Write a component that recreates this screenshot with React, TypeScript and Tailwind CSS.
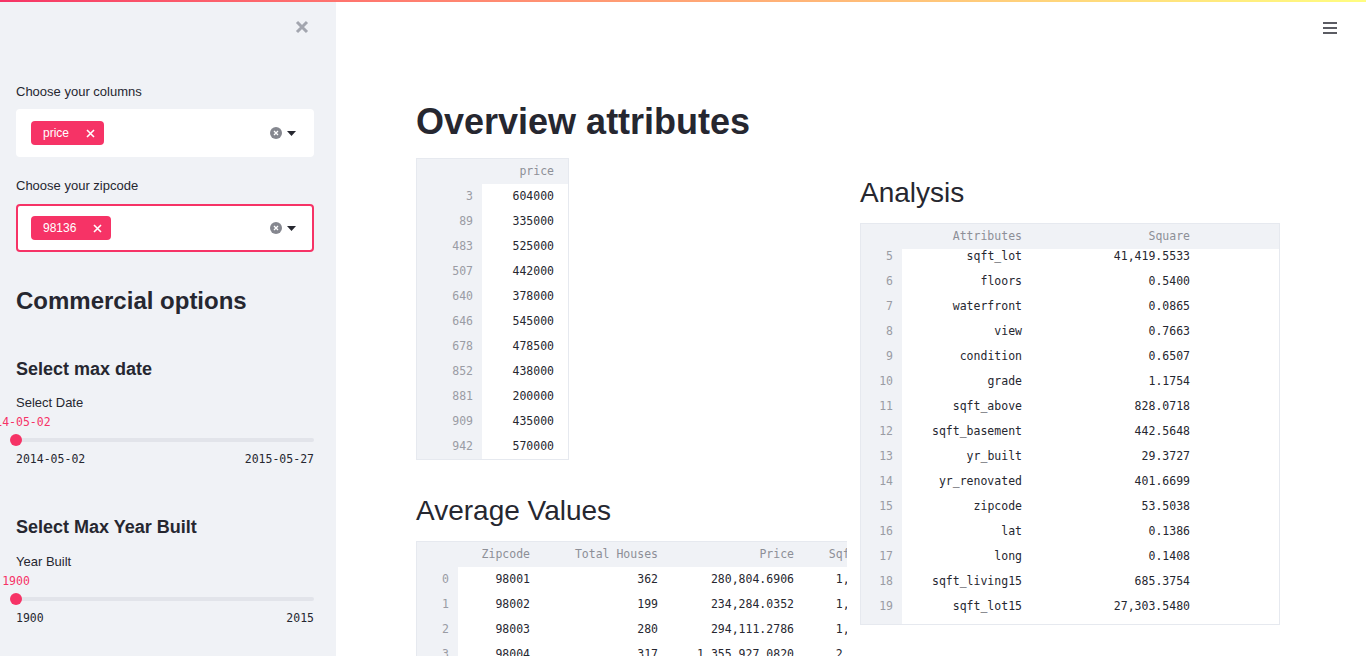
import React from "react";

const sans = "font-['Liberation_Sans',Arial,sans-serif]";
const mono = "font-['DejaVu_Sans_Mono',monospace]";

type Column = { name: string; w: string; cells: string[] };

function DataFrame({
  indexW,
  index,
  columns,
  bodyClass = "",
  shift = "",
  className = "",
}: {
  indexW: string;
  index: string[];
  columns: Column[];
  bodyClass?: string;
  shift?: string;
  className?: string;
}) {
  return (
    <div className={`overflow-hidden border-[#e6e9ef] bg-white text-[11.5px] ${mono} ${className}`}>
      <div className="flex h-[25px] whitespace-nowrap bg-[#f0f2f6] leading-[25px] text-[#8d8f97]">
        <div className={`${indexW} shrink-0`} />
        {columns.map((c) => (
          <div key={c.name} className={`${c.w} shrink-0 pr-[14px] text-right`}>
            {c.name}
          </div>
        ))}
      </div>
      <div className={`flex ${bodyClass}`}>
        <div className={`${indexW} shrink-0 bg-[#f0f2f6] text-[#9a9ca4]`}>
          <div className={shift}>
            {index.map((i) => (
              <div key={i} className="h-[25px] pr-[9px] text-right leading-[25px]">
                {i}
              </div>
            ))}
          </div>
        </div>
        {columns.map((c) => (
          <div key={c.name} className={`${c.w} shrink-0 text-[#262730]`}>
            <div className={shift}>
              {c.cells.map((v, k) => (
                <div key={k} className="h-[25px] whitespace-nowrap pr-[14px] text-right leading-[25px]">
                  {v}
                </div>
              ))}
            </div>
          </div>
        ))}
      </div>
    </div>
  );
}

function Multiselect({ value, focused }: { value: string; focused?: boolean }) {
  return (
    <div
      className={`flex h-12 items-center rounded-[4px] border-2 bg-white pl-[13px] pr-4 ${
        focused ? "border-[#f63366]" : "border-white"
      }`}
    >
      <span className="flex h-6 items-center rounded-[4px] bg-[#f63366] pl-3 pr-[9px] text-[12px] text-white">
        {value}
        <svg className="ml-[17px]" width="9" height="9" viewBox="0 0 9 9">
          <path d="M1 1L8 8M8 1L1 8" stroke="white" strokeWidth="1.6" />
        </svg>
      </span>
      <span className="ml-auto flex items-center gap-[5px]">
        <svg width="12" height="12" viewBox="0 0 12 12">
          <circle cx="6" cy="6" r="6" fill="#85878f" />
          <path d="M4 4L8 8M8 4L4 8" stroke="white" strokeWidth="1.3" />
        </svg>
        <svg width="9" height="5" viewBox="0 0 9 5">
          <path d="M0 0H9L4.5 5Z" fill="#262730" />
        </svg>
      </span>
    </div>
  );
}

function Slider({ label, value, min, max }: { label: string; value: string; min: string; max: string }) {
  return (
    <div>
      <div className="text-[13px] leading-4">{label}</div>
      <div className={`mt-1 flex w-0 justify-center whitespace-nowrap text-[11.5px] leading-[14px] text-[#f63366] ${mono}`}>
        {value}
      </div>
      <div className="relative mt-[5px] h-3">
        <div className="absolute inset-x-0 top-1 h-1 rounded bg-[#e2e4ea]" />
        <div className="absolute -left-[6px] top-0 h-3 w-3 rounded-full bg-[#f63366]" />
      </div>
      <div className={`mt-[6px] flex justify-between text-[11.5px] leading-[14px] ${mono}`}>
        <span>{min}</span>
        <span>{max}</span>
      </div>
    </div>
  );
}

const priceIndex = ["3", "89", "483", "507", "640", "646", "678", "852", "881", "909", "942"];
const prices = ["604000", "335000", "525000", "442000", "378000", "545000", "478500", "438000", "200000", "435000", "570000"];

const analysis = [
  ["5", "sqft_lot", "41,419.5533"],
  ["6", "floors", "0.5400"],
  ["7", "waterfront", "0.0865"],
  ["8", "view", "0.7663"],
  ["9", "condition", "0.6507"],
  ["10", "grade", "1.1754"],
  ["11", "sqft_above", "828.0718"],
  ["12", "sqft_basement", "442.5648"],
  ["13", "yr_built", "29.3727"],
  ["14", "yr_renovated", "401.6699"],
  ["15", "zipcode", "53.5038"],
  ["16", "lat", "0.1386"],
  ["17", "long", "0.1408"],
  ["18", "sqft_living15", "685.3754"],
  ["19", "sqft_lot15", "27,303.5480"],
];

const averages = [
  ["0", "98001", "362", "280,804.6906", "1,903.7818"],
  ["1", "98002", "199", "234,284.0352", "1,627.7437"],
  ["2", "98003", "280", "294,111.2786", "1,928.8821"],
  ["3", "98004", "317", "1,355,927.0820", "2,909.0221"],
  ["4", "98005", "168", "810,164.8750", "2,656.8036"],
];

export default function App() {
  return (
    <div className={`relative flex h-[656px] w-full overflow-hidden bg-white text-[#262730] ${sans}`}>
      <div className="absolute inset-x-0 top-0 z-10 h-[2px] bg-linear-to-r from-[#f63366] to-[#fffd80]" />

      <aside className="w-[336px] shrink-0 overflow-hidden bg-[#f0f2f6] pl-4 pr-[22px]">
        <div className="flex h-[54px] items-center justify-end pr-[5px]">
          <svg width="14" height="14" viewBox="0 0 14 14">
            <path d="M2 2L12 12M12 2L2 12" stroke="#a3a6af" strokeWidth="3" />
          </svg>
        </div>
        <div className="mt-[30px] mb-[9px] text-[13px] leading-4">Choose your columns</div>
        <Multiselect value="price" />
        <div className="mt-[21px] mb-[10px] text-[13px] leading-4">Choose your zipcode</div>
        <Multiselect value="98136" focused />
        <h2 className="mt-[34px] text-[24px] font-bold leading-[29px]">Commercial options</h2>
        <h3 className="mt-[43px] mb-[15px] text-[18px] font-bold leading-[22px]">Select max date</h3>
        <Slider label="Select Date" value="2014-05-02" min="2014-05-02" max="2015-05-27" />
        <h3 className="mt-[50px] mb-4 text-[18px] font-bold leading-[22px]">Select Max Year Built</h3>
        <Slider label="Year Built" value="1900" min="1900" max="2015" />
      </aside>

      <main className="flex flex-1 flex-col">
        <div className="flex h-14 shrink-0 items-center justify-end pr-[29px]">
          <svg width="14" height="12" viewBox="0 0 14 12">
            <path d="M0 1H14M0 6H14M0 11H14" stroke="#262730" strokeWidth="1.5" />
          </svg>
        </div>
        <div className="pl-20 pt-11">
          <h1 className="mb-[15px] text-[36px] font-bold leading-[43px]">Overview attributes</h1>
          <div className="grid grid-cols-[432px_420px] items-start gap-x-3">
            <div className="min-w-0">
              <DataFrame
                className="w-fit border"
                indexW="w-[65px]"
                index={priceIndex}
                columns={[{ name: "price", w: "w-[86px]", cells: prices }]}
              />
              <h2 className="mt-4 mb-4 pt-[21px] text-[28px] leading-[28px]">Average Values</h2>
              <DataFrame
                className="w-[431px] border border-r-0"
                indexW="w-[41px]"
                index={averages.map((r) => r[0])}
                columns={[
                  { name: "Zipcode", w: "w-[86px]", cells: averages.map((r) => r[1]) },
                  { name: "Total Houses", w: "w-[128px]", cells: averages.map((r) => r[2]) },
                  { name: "Price", w: "w-[136px]", cells: averages.map((r) => r[3]) },
                  { name: "Sqft Living", w: "w-[111px]", cells: averages.map((r) => r[4]) },
                ]}
              />
            </div>
            <div>
              <h2 className="mb-4 pt-[21px] text-[28px] leading-[28px]">Analysis</h2>
              <DataFrame
                className="w-[420px] border"
                indexW="w-[41px]"
                bodyClass="h-[375px] overflow-hidden"
                shift="-mt-[5px]"
                index={analysis.map((r) => r[0])}
                columns={[
                  { name: "Attributes", w: "w-[134px]", cells: analysis.map((r) => r[1]) },
                  { name: "Square", w: "w-[168px]", cells: analysis.map((r) => r[2]) },
                ]}
              />
            </div>
          </div>
        </div>
      </main>
    </div>
  );
}
